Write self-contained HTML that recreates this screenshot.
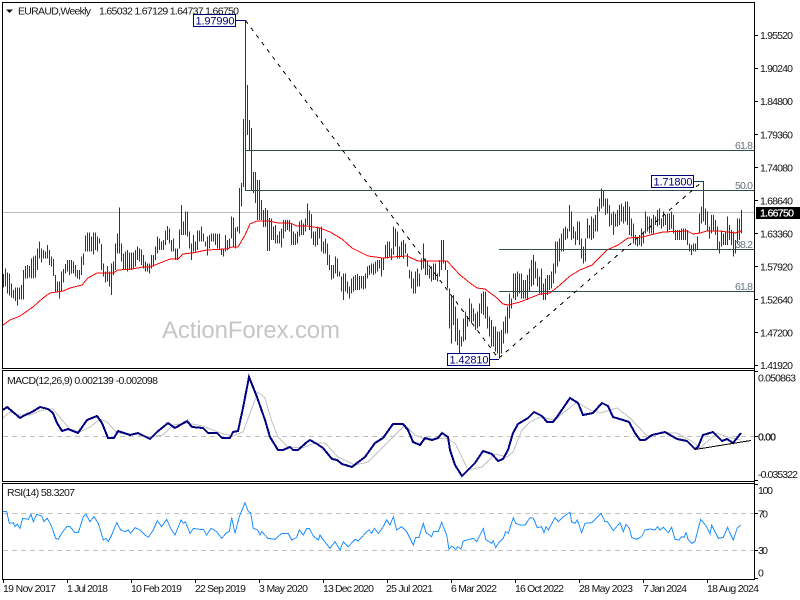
<!DOCTYPE html>
<html><head><meta charset="utf-8"><title>EURAUD Weekly</title>
<style>
html,body{margin:0;padding:0;background:#fff;width:800px;height:600px;overflow:hidden}
svg{display:block}
text{font-family:"Liberation Sans",sans-serif;font-size:10.5px;fill:#141414}
.b{fill:none;stroke:#103f5c;stroke-width:1;vector-effect:non-scaling-stroke;shape-rendering:crispEdges}
.l{fill:none;shape-rendering:crispEdges}
.s{vector-effect:non-scaling-stroke}
</style></head><body>
<svg width="800" height="600" viewBox="0 0 800 600" xmlns="http://www.w3.org/2000/svg">
<rect width="800" height="600" fill="#fff"/>
<text x="162" y="338" style="font-size:24px;fill:#c6c6c6" textLength="178">ActionForex.com</text>
<!-- price line -->
<path d="M3 212.5H754" stroke="#c0c0c0" class="l"/>
<!-- bars -->
<path class="b" transform="translate(0 190) scale(1 .33333)" d="M3.5 252V293M5.5 235V290M7.5 247V310M9.5 250V317M11.5 280V322M13.5 300V325M15.5 293V333M17.5 292V347M19.5 292V328M21.5 285V328M23.5 240V328M25.5 228V265M27.5 225V265M29.5 228V262M31.5 205V265M33.5 200V265M35.5 197V262M37.5 175V240M39.5 155V205M41.5 175V217M43.5 180V205M45.5 185V205M47.5 165V205M49.5 180V225M51.5 200V230M53.5 207V258M55.5 255V305M57.5 275V305M59.5 275V325M61.5 245V305M63.5 237V278M65.5 222V250M67.5 210V245M69.5 210V255M71.5 210V250M73.5 215V250M75.5 225V260M77.5 240V265M79.5 240V268M81.5 200V255M83.5 190V225M85.5 137V185M87.5 127V185M89.5 127V185M91.5 140V185M93.5 127V193M95.5 127V180M97.5 140V185M99.5 145V160M101.5 162V240M103.5 220V260M105.5 245V278M107.5 228V275M109.5 245V290M111.5 220V315M113.5 215V255M115.5 160V240M117.5 130V190M119.5 52V190M121.5 160V215M123.5 190V240M125.5 185V240M127.5 180V245M129.5 187V240M131.5 187V240M133.5 187V235M135.5 180V230M137.5 170V210M139.5 175V215M141.5 178V225M143.5 195V235M145.5 215V245M147.5 220V245M149.5 220V250M151.5 195V235M153.5 195V230M155.5 170V210M157.5 140V190M159.5 145V180M161.5 155V180M163.5 150V180M165.5 122V165M167.5 108V150M169.5 115V160M171.5 150V185M173.5 145V185M175.5 175V210M177.5 175V210M179.5 118V175M181.5 45V135M183.5 95V135M185.5 65V135M187.5 65V140M189.5 125V175M191.5 160V210M193.5 135V185M195.5 155V185M197.5 122V180M199.5 122V155M201.5 110V155M203.5 130V155M205.5 155V170M207.5 140V197M209.5 135V175M211.5 130V155M213.5 130V155M215.5 130V165M217.5 132V175M219.5 130V180M221.5 175V195M223.5 175V200M225.5 135V185M227.5 150V180M229.5 145V175M231.5 80V145M233.5 82V170M235.5 112V175M237.5 110V125M239.5 -6V130M241.5 -21V50"/>
<path class="b" d="M243.5 119V187M245.5 20V190M247.5 85V135M249.5 120V150M251.5 128V190M253.5 172V193M255.5 172V203M257.5 180V220M259.5 180V220M261.5 200V220M263.5 210V227M265.5 208V227M267.5 210V251M269.5 218V251"/>
<path class="b" transform="translate(0 190) scale(1 .33333)" d="M271.5 85V150M273.5 110V150M275.5 105V160M277.5 135V160M279.5 125V160M281.5 115V172M283.5 90V145M285.5 90V125M287.5 90V120M289.5 90V125M291.5 100V165M293.5 125V165M295.5 130V165M297.5 125V160M299.5 95V140M301.5 90V135M303.5 100V135M305.5 85V125M307.5 40V105M309.5 62V120M311.5 72V145M313.5 125V165M315.5 125V170M317.5 110V165M319.5 115V145M321.5 110V185M323.5 155V190M325.5 145V190M327.5 160V225M329.5 195V240M331.5 225V268M333.5 225V265M335.5 200V250M337.5 205V260M339.5 245V260M341.5 260V305M343.5 250V330M345.5 250V305M347.5 275V310M349.5 290V325M351.5 265V310M353.5 260V305M355.5 255V300M357.5 252V300M359.5 258V300M361.5 258V295M363.5 258V298M365.5 250V295M367.5 230V265M369.5 225V255M371.5 220V250M373.5 220V255M375.5 215V250M377.5 210V245M379.5 210V235M381.5 205V260M383.5 205V240M385.5 165V205M387.5 155V205M389.5 155V200M391.5 175V210M393.5 110V195M395.5 115V170M397.5 125V205M399.5 170V205M401.5 155V200M403.5 150V205M405.5 160V190M407.5 190V230M409.5 240V265M411.5 245V295M413.5 265V310M415.5 245V310M417.5 235V290M419.5 250V290M421.5 205V240M423.5 160V235M425.5 205V255M427.5 215V255M429.5 235V265M431.5 230V275M433.5 220V270M435.5 220V270M437.5 250V275M439.5 210V260M441.5 150V240M443.5 150V220M445.5 215V240M447.5 240V295M449.5 295V415M451.5 320V460M453.5 315V405M455.5 350V455M457.5 385V465M459.5 420V505M461.5 440V470M463.5 385V455M465.5 365V450M467.5 380V410M469.5 325V395M471.5 340V400M473.5 355V395M475.5 370V420M477.5 365V415M479.5 340V410M481.5 310V370M483.5 305V375M485.5 305V385M487.5 350V415M489.5 380V440M491.5 390V470M493.5 410V470M495.5 410V485M497.5 425V490M499.5 425V505M501.5 420V490M503.5 395V460M505.5 380V430M507.5 350V430M509.5 310V385M511.5 325V355M513.5 250V325M515.5 250V330M517.5 245V320M519.5 250V310M521.5 250V325M523.5 270V325M525.5 270V325M527.5 255V330M529.5 235V305M531.5 210V290M533.5 195V285M535.5 215V265M537.5 235V290M539.5 260V310"/>
<path class="b" transform="translate(0 130) scale(1 .33333)" d="M541.5 415V495M543.5 460V510M545.5 445V510M547.5 435V495M549.5 435V480M551.5 425V475M553.5 400V460M555.5 335V430M557.5 335V410M559.5 325V395M561.5 310V365M563.5 295V365M565.5 290V330M567.5 295V325M569.5 225V305M571.5 245V330M573.5 290V325M575.5 305V345M577.5 275V330M579.5 275V345M581.5 325V385M583.5 350V400M585.5 325V395M587.5 265V325M589.5 285V325M591.5 260V330M593.5 265V325M595.5 255V305M597.5 230V305M599.5 205V245M601.5 175V235M603.5 180V230M605.5 205V255M607.5 205V250M609.5 225V290M611.5 250V285M613.5 245V315M615.5 250V290M617.5 240V290M619.5 225V285M621.5 220V275M623.5 230V280M625.5 215V275M627.5 215V285M629.5 230V315M631.5 265V320M633.5 280V340M635.5 315V345M637.5 325V350M639.5 315V345M641.5 295V350M643.5 305V340M645.5 245V310M647.5 260V305M649.5 260V310M651.5 265V310M653.5 255V310M655.5 260V285M657.5 240V290M659.5 235V285M661.5 265V295M663.5 245V290M665.5 255V285M667.5 250V305M669.5 250V300M671.5 245V295M673.5 255V310M675.5 300V330M677.5 300V330M679.5 300V330M681.5 295V330M683.5 295V330M685.5 295V330M687.5 300V345M689.5 340V365M691.5 345V375M693.5 340V365M695.5 340V365M697.5 320V360M699.5 250V310M701.5 230V280M703.5 155V275M705.5 235V285M707.5 245V305M709.5 290V325M711.5 255V310M713.5 255V305M715.5 270V315M717.5 290V360M719.5 335V370M721.5 305V350M723.5 310V345M725.5 305V345M727.5 260V345M729.5 285V330M731.5 300V345M733.5 305V380M735.5 330V370M737.5 265V340M739.5 265V330M741.5 240V310"/>
<!-- MA -->
<polyline class="l" stroke="#f00" stroke-width="1" points="3,325 10,320 20,316 33,307 43,298 50,293 63,291 70,288 82,285 88,278 97,273 113,273 118,270 132,269 143,267 150,267 160,263 170,259 178,259 183,254 192,253 207,250 227,249 232,247 238,247 245,235 250,224 257,221 269,221 278,223 290,223 297,226 307,226 320,228 330,232 342,239 352,248 368,256 383,258 392,257 407,256 418,261 447,261 460,275 470,283 477,288 485,289 497,298 503,304 508,305 520,302 530,298 540,294 550,293 560,285 570,276 580,270 592,265 607,250 618,245 628,238 643,237 650,235 663,232 687,231 693,234 700,233 707,231 720,231 735,233 741,231"/>
<!-- fib -->
<g stroke="#2f4f4f" class="l"><path d="M245 150.5H754M245 190.5H754M499 249.5H754M499 291.5H754"/></g>
<text x="735" y="149" style="fill:#66757a" textLength="18">61.8</text>
<text x="735" y="189" style="fill:#66757a" textLength="18">50.0</text>
<text x="735" y="248" style="fill:#66757a" textLength="18">38.2</text>
<text x="735" y="290" style="fill:#66757a" textLength="18">61.8</text>
<!-- trendlines -->
<path d="M245.5 20.5L498.5 358.5L703 181" stroke="#000" fill="none" stroke-dasharray="4 5" class="l"/>
<!-- labels -->
<g fill="#fff" stroke="#000080" shape-rendering="crispEdges">
<rect x="193.5" y="14.5" width="42" height="12"/>
<rect x="447.5" y="353.5" width="42" height="12"/>
<rect x="651.5" y="175.5" width="42" height="12"/>
<path d="M236 20.5H245M490 359.5H499" fill="none"/>
</g>
<path d="M694 181.5H703.5V190" stroke="#103f5c" fill="none" class="l"/>
<text x="195.5" y="24.5" style="font-size:11px;fill:#000080" textLength="39">1.97990</text>
<text x="449.5" y="363.5" style="font-size:11px;fill:#000080" textLength="39">1.42810</text>
<text x="653.5" y="185.5" style="font-size:11px;fill:#000080" textLength="39">1.71800</text>
<!-- MACD -->
<path d="M3 436.5H754" stroke="#c0c0c0" stroke-dasharray="5 4" class="l"/>
<polyline class="l" stroke="#c0c0c0" points="3,418 10,412 20,415 30,415 43,410 53,409 62,420 70,429 80,432 90,427 100,419 107,422 117,433 133,434 150,437 163,435 173,425 187,423 203,426 220,433 233,436 243,432 258,392 265,398 272,422 278,437 288,447 302,448 315,443 325,443 338,457 355,465 368,462 385,445 405,425 415,435 428,440 445,438 455,443 468,470 482,467 495,454 507,457 513,452 522,430 530,422 540,417 555,420 563,413 577,402 590,410 600,413 617,408 630,418 647,436 663,433 677,433 693,442 700,448 717,433 727,437 740,440"/>
<polyline class="l" stroke="#000080" stroke-width="2" points="3,410 7,407 13,412 20,418 25,415 32,412 40,407 48,409 53,413 57,423 62,431 68,429 78,433 87,420 97,416 102,423 108,438 114,438 118,431 130,435 138,433 150,439 157,432 168,423 175,428 187,421 192,427 203,428 208,433 217,433 222,438 230,438 233,432 238,431 243,408 249,377 257,397 265,420 270,437 278,450 283,450 290,447 293,450 298,450 307,442 310,440 317,444 323,448 332,459 337,460 342,464 352,467 357,463 365,457 375,443 383,438 393,424 403,424 408,430 413,442 420,445 425,438 432,440 438,438 442,433 448,437 450,450 455,465 462,476 475,463 483,451 492,454 498,461 503,459 508,450 513,433 518,424 528,418 534,412 542,416 547,422 553,422 557,417 570,398 578,403 583,415 593,413 602,403 608,406 613,417 623,420 629,422 635,433 640,440 645,440 652,435 665,432 677,439 687,441 695,449 698,447 703,435 713,432 722,441 727,439 733,443 741,433"/>
<path d="M695 449.5L751 440.5" stroke="#000" class="l"/>
<!-- RSI -->
<path d="M3 513.5H754M3 550.5H754" stroke="#c0c0c0" stroke-dasharray="5 4" class="l"/>
<g transform="translate(0 480) scale(.33333)">
<polyline class="l s" stroke="#1e90ff" points="8,95 20,95 28,130 40,128 45,140 52,133 60,145 68,115 85,118 93,103 100,125 110,103 125,108 132,125 142,115 155,140 167,175 175,178 185,160 200,140 210,140 225,158 235,158 250,110 258,103 270,125 282,110 295,130 310,180 318,175 325,185 335,165 350,128 362,150 375,155 385,150 392,160 405,143 420,150 435,165 445,172 460,150 472,122 485,140 500,118 512,145 525,165 543,120 550,130 556,125 570,160 580,145 600,148 610,148 620,165 633,145 650,155 665,175 680,158 688,155 695,113 705,160 718,110 735,68 745,95 752,98 760,145 773,150 780,165 785,155 795,165"/>
</g>
<g transform="translate(265 480) scale(.33333)">
<polyline class="l s" stroke="#1e90ff" points="0,165 8,175 30,178 50,160 70,160 80,180 95,172 103,150 115,165 125,145 133,145 145,168 160,180 165,165 175,180 195,205 210,185 225,210 235,185 250,200 270,178 280,183 290,172 305,155 312,150 320,160 328,145 340,160 355,140 365,120 375,135 385,110 395,150 410,140 425,155 445,195 452,172 462,172 475,130 483,158 500,170 505,155 520,155 530,127 545,165 552,208 560,198 572,208 578,200 588,207 595,183 625,175 635,185 655,145 662,178 680,190 685,182 692,203 700,190 715,175 722,155 730,160 745,113 752,130 765,135 780,135 795,113"/>
</g>
<g transform="translate(530 480) scale(.33333)">
<polyline class="l s" stroke="#1e90ff" points="0,113 10,115 22,143 35,140 42,158 48,140 55,150 75,113 85,125 100,110 120,97 125,125 135,130 142,120 155,158 165,130 185,128 213,100 225,125 232,125 250,152 270,128 280,155 288,133 298,145 305,172 320,178 335,170 345,150 360,147 375,150 383,140 390,150 400,142 415,158 425,142 435,178 447,180 455,170 462,172 468,158 475,180 485,190 495,185 505,145 512,118 530,140 540,162 545,135 565,175 580,172 593,142 600,160 610,180 622,143 632,136"/>
</g>
<!-- frames -->
<g fill="#000" shape-rendering="crispEdges">
<rect x="2" y="2" width="753" height="1"/>
<rect x="2" y="2" width="1" height="367"/>
<rect x="754" y="2" width="1" height="578"/>
<rect x="2" y="368" width="753" height="1"/>
<rect x="2" y="370" width="753" height="1"/>
<rect x="2" y="370" width="1" height="112"/>
<rect x="2" y="481" width="753" height="1"/>
<rect x="2" y="483" width="753" height="1"/>
<rect x="2" y="483" width="1" height="97"/>
<rect x="2" y="579" width="753" height="1"/>
</g>
<!-- ticks -->
<path stroke="#000" class="l" d="M755 35.5h3M755 68.5h3M755 101.5h3M755 134.5h3M755 167.5h3M755 200.5h3M755 233.5h3M755 266.5h3M755 299.5h3M755 332.5h3M755 365.5h3M755 371.5h3M755 436.5h3M755 480.5h3M755 484.5h3M755 513.5h3M755 550.5h3M755 578.5h3M3.5 580v3M67.5 580v3M131.5 580v3M195.5 580v3M259.5 580v3M323.5 580v3M387.5 580v3M451.5 580v3M515.5 580v3M579.5 580v3M643.5 580v3M707.5 580v3"/>
<!-- header -->
<path d="M6 9.5h7l-3.5 3.5z" fill="#111"/>
<text x="18" y="14.5" textLength="73">EURAUD,Weekly</text>
<text x="99" y="14.5" textLength="140">1.65032 1.67129 1.64737 1.66750</text>
<text x="7" y="384" textLength="151">MACD(12,26,9) 0.002139 -0.002098</text>
<text x="7" y="496" textLength="68">RSI(14) 58.3207</text>
<!-- price axis -->
<text x="760" y="39" textLength="33">1.95520</text>
<text x="760" y="72" textLength="33">1.90240</text>
<text x="760" y="105" textLength="33">1.84800</text>
<text x="760" y="138.5" textLength="33">1.79360</text>
<text x="760" y="171.5" textLength="33">1.74080</text>
<text x="760" y="204.5" textLength="33">1.68640</text>
<rect x="756" y="207" width="44" height="12" fill="#000"/>
<text x="760" y="216.5" style="fill:#fff" stroke="#fff" stroke-width=".25" textLength="34">1.66750</text>
<text x="760" y="237.5" textLength="33">1.63360</text>
<text x="760" y="270.5" textLength="33">1.57920</text>
<text x="760" y="303.5" textLength="33">1.52640</text>
<text x="760" y="336.5" textLength="33">1.47200</text>
<text x="760" y="369" textLength="33">1.41920</text>
<text x="758" y="381.5" textLength="38">0.050863</text>
<text x="758" y="440.5" textLength="18" stroke="#141414" stroke-width=".25">0.00</text>
<text x="758" y="478" textLength="40">-0.035322</text>
<text x="758" y="494" textLength="15">100</text>
<text x="758" y="517.5" textLength="10">70</text>
<text x="758" y="554" textLength="10">30</text>
<text x="758" y="576.5" textLength="5">0</text>
<!-- time axis -->
<text x="3" y="592" textLength="53">19 Nov 2017</text>
<text x="67" y="592" textLength="41">1 Jul 2018</text>
<text x="131" y="592" textLength="51">10 Feb 2019</text>
<text x="195" y="592" textLength="51">22 Sep 2019</text>
<text x="259" y="592" textLength="49">3 May 2020</text>
<text x="323" y="592" textLength="51">13 Dec 2020</text>
<text x="386" y="592" textLength="47">25 Jul 2021</text>
<text x="451" y="592" textLength="46">6 Mar 2022</text>
<text x="515" y="592" textLength="49">16 Oct 2022</text>
<text x="579" y="592" textLength="54">28 May 2023</text>
<text x="643" y="592" textLength="44">7 Jan 2024</text>
<text x="707" y="592" textLength="52">18 Aug 2024</text>
</svg>
</body></html>
